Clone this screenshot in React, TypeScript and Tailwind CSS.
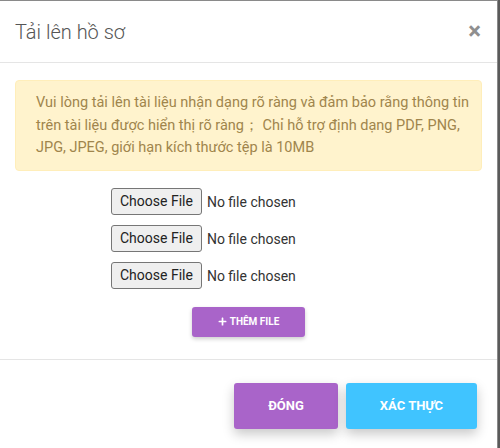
import React from "react";
import { FaPlus } from "react-icons/fa";

const FileRow: React.FC = () => (
  <input
    type="file"
    className="font-['Roboto',sans-serif] text-[14px] text-[#333] w-[240px] leading-[18px] file:font-['Roboto',sans-serif] file:text-[14px] file:text-[#222] file:bg-[#efefef] file:border file:border-solid file:border-[#767676] file:rounded-[3px] file:px-[8px] file:py-[3px] file:mr-[5px] file:h-[27px]"
  />
);

const App: React.FC = () => {
  return (
    <div className="w-[500px] h-[448px] bg-[#5a5a5a] overflow-hidden font-['Roboto',sans-serif]">
      <div className="w-[498px] h-[448px] bg-white border-t border-r border-[#8a8a8a] flex flex-col">
        <div className="h-[62px] flex items-center justify-between pl-[15px] pr-[16px] border-b border-[#e5e5e5]">
          <h4 className="text-[20px] font-light text-[#555] leading-none">Tải lên hồ sơ</h4>
          <button className="text-[24px] font-bold text-[#8f8f8f] leading-none -mt-[2px]">×</button>
        </div>

        <div className="px-[15px] pt-[17px] pb-[22px] border-b border-[#e5e5e5]">
          <div className="bg-[#fff3cd] border border-[#ffeeba] rounded-[4px] pl-[20px] pr-[12px] pt-[11px] pb-[10px] text-[14.5px] leading-[22.5px] text-[#a0854c]">
            Vui lòng tải lên tài liệu nhận dạng rõ ràng và đảm bảo rằng thông tin trên tài liệu được hiển thị rõ ràng；&nbsp;Chỉ hỗ trợ định dạng PDF, PNG, JPG, JPEG, giới hạn kích thước tệp là 10MB
          </div>

          <div className="flex flex-col gap-[10px] pl-[96px] mt-[17px]">
            <FileRow />
            <FileRow />
            <FileRow />
          </div>

          <div className="flex justify-center mt-[18px]">
            <button className="w-[113px] h-[30px] bg-[#a964c9] rounded-[3px] text-white text-[10px] font-bold flex items-center justify-center gap-[3px] shadow-[0_2px_4px_rgba(0,0,0,0.2)]">
              <FaPlus size={9} />
              THÊM FILE
            </button>
          </div>
        </div>

        <div className="flex justify-end gap-[8px] pr-[20px] pt-[23px]">
          <button className="w-[104px] h-[46px] bg-[#a964c9] rounded-[3px] text-white text-[13px] font-bold shadow-[0_5px_12px_rgba(0,0,0,0.22)]">
            ĐÓNG
          </button>
          <button className="w-[131px] h-[46px] bg-[#40c4ff] rounded-[3px] text-white text-[13px] font-bold shadow-[0_5px_12px_rgba(0,0,0,0.22)]">
            XÁC THỰC
          </button>
        </div>
      </div>
    </div>
  );
};

export default App;
